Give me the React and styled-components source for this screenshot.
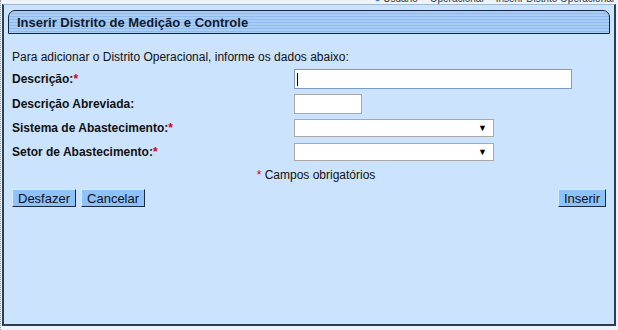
import React from 'react';
import styled, { createGlobalStyle } from 'styled-components';

const Global = createGlobalStyle`
  body {
    margin: 0;
    background: #eef3f8;
    font-family: "Liberation Sans", Arial, sans-serif;
  }
`;

const Page = styled.div`
  width: 618px;
  height: 330px;
  box-sizing: border-box;
  overflow: hidden;
  background: #eef3f8;
  border-left: 1px dotted #8797ab;
`;

const Crumb = styled.div`
  height: 4px;
  overflow: hidden;
  display: flex;
  justify-content: flex-end;
  gap: 12px;
  padding-right: 4px;
  font-size: 10px;
  line-height: 1;
  color: #333;
  & span { margin-top: -6px; }
  & b { color: #3a78c8; font-weight: normal; }
`;

const Panel = styled.div`
  margin-left: 1px;
  width: 614px;
  height: 322px;
  box-sizing: border-box;
  background: #cbe3fd;
  border-left: 2px solid #2c3e55;
  border-right: 2px solid #2c3e55;
  border-bottom: 2px solid #2c3e55;
  border-top: 1px solid #9fb8d4;
  padding: 5px 4px 0 4px;
`;

const Header = styled.div`
  height: 24px;
  box-sizing: border-box;
  border: 1px solid #12254a;
  border-radius: 7px 7px 0 0;
  background: repeating-linear-gradient(
    to bottom,
    #a9cdf5 0px,
    #a9cdf5 2px,
    #8fbbee 2px,
    #8fbbee 3px
  );
  display: flex;
  align-items: center;
  padding-left: 8px;
`;

const Title = styled.h1`
  margin: 0;
  font-family: "Liberation Sans", Arial, sans-serif;
  font-size: 13px;
  font-weight: bold;
  color: #111a2e;
`;

const Body = styled.div`
  padding: 16px 4px 0 4px;
  font-size: 12px;
  color: #111;
`;

const Intro = styled.p`
  margin: 0 0 3px 0;
`;

const Row = styled.div`
  display: grid;
  grid-template-columns: 282px 1fr;
  align-items: center;
  height: ${(p) => p.h}px;
`;

const Label = styled.label`
  font-weight: bold;
`;

const Req = styled.span`
  color: #d0021b;
`;

const Input = styled.input`
  width: ${(p) => p.w}px;
  height: 20px;
  box-sizing: border-box;
  border: 1px solid ${(p) => (p.focus ? '#7a9cc8' : '#a9a9a9')};
  background: #fff;
  padding: 0 2px;
  font: inherit;
  outline: none;
`;

const Select = styled.div`
  width: 200px;
  height: 18px;
  box-sizing: border-box;
  border: 1px solid #a9a9a9;
  background: #fff;
  display: flex;
  align-items: center;
  justify-content: flex-end;
  padding-right: 6px;
  font-size: 9px;
  color: #000;
`;

const Note = styled.div`
  text-align: center;
  margin: 5px 0 7px 0;
  padding-left: 14px;
  line-height: 14px;
`;

const Actions = styled.div`
  display: flex;
  gap: 5px;
  & > :last-child { margin-left: auto; }
`;

const Button = styled.button`
  height: 18px;
  box-sizing: border-box;
  padding: 0 5px;
  font-family: "Liberation Sans", Arial, sans-serif;
  font-size: 13px;
  line-height: 1;
  color: #111;
  background: #8ec2fb;
  border: 1px solid;
  border-color: #d8ecff #1a2a40 #1a2a40 #d8ecff;
`;

const Cursor = styled.span`
  position: absolute;
  width: 1px;
  height: 13px;
  background: #000;
  margin: 4px 0 0 3px;
`;

const InputWrap = styled.div`
  position: relative;
  display: flex;
`;

export default function App() {
  return (
    <Page>
      <Global />
      <Crumb>
        <span><b>●</b> Usuário</span>
        <span>Operacional</span>
        <span>Inserir Distrito Operacional</span>
      </Crumb>
      <Panel>
        <Header>
          <Title>Inserir Distrito de Medição e Controle</Title>
        </Header>
        <Body>
          <Intro>Para adicionar o Distrito Operacional, informe os dados abaixo:</Intro>
          <Row h={24}>
            <Label>Descrição:<Req>*</Req></Label>
            <InputWrap>
              <Cursor />
              <Input w={278} focus />
            </InputWrap>
          </Row>
          <Row h={25}>
            <Label>Descrição Abreviada:</Label>
            <Input w={68} />
          </Row>
          <Row h={24}>
            <Label>Sistema de Abastecimento:<Req>*</Req></Label>
            <Select>▼</Select>
          </Row>
          <Row h={23}>
            <Label>Setor de Abastecimento:<Req>*</Req></Label>
            <Select>▼</Select>
          </Row>
          <Note><Req>*</Req> Campos obrigatórios</Note>
          <Actions>
            <Button>Desfazer</Button>
            <Button>Cancelar</Button>
            <Button>Inserir</Button>
          </Actions>
        </Body>
      </Panel>
    </Page>
  );
}
